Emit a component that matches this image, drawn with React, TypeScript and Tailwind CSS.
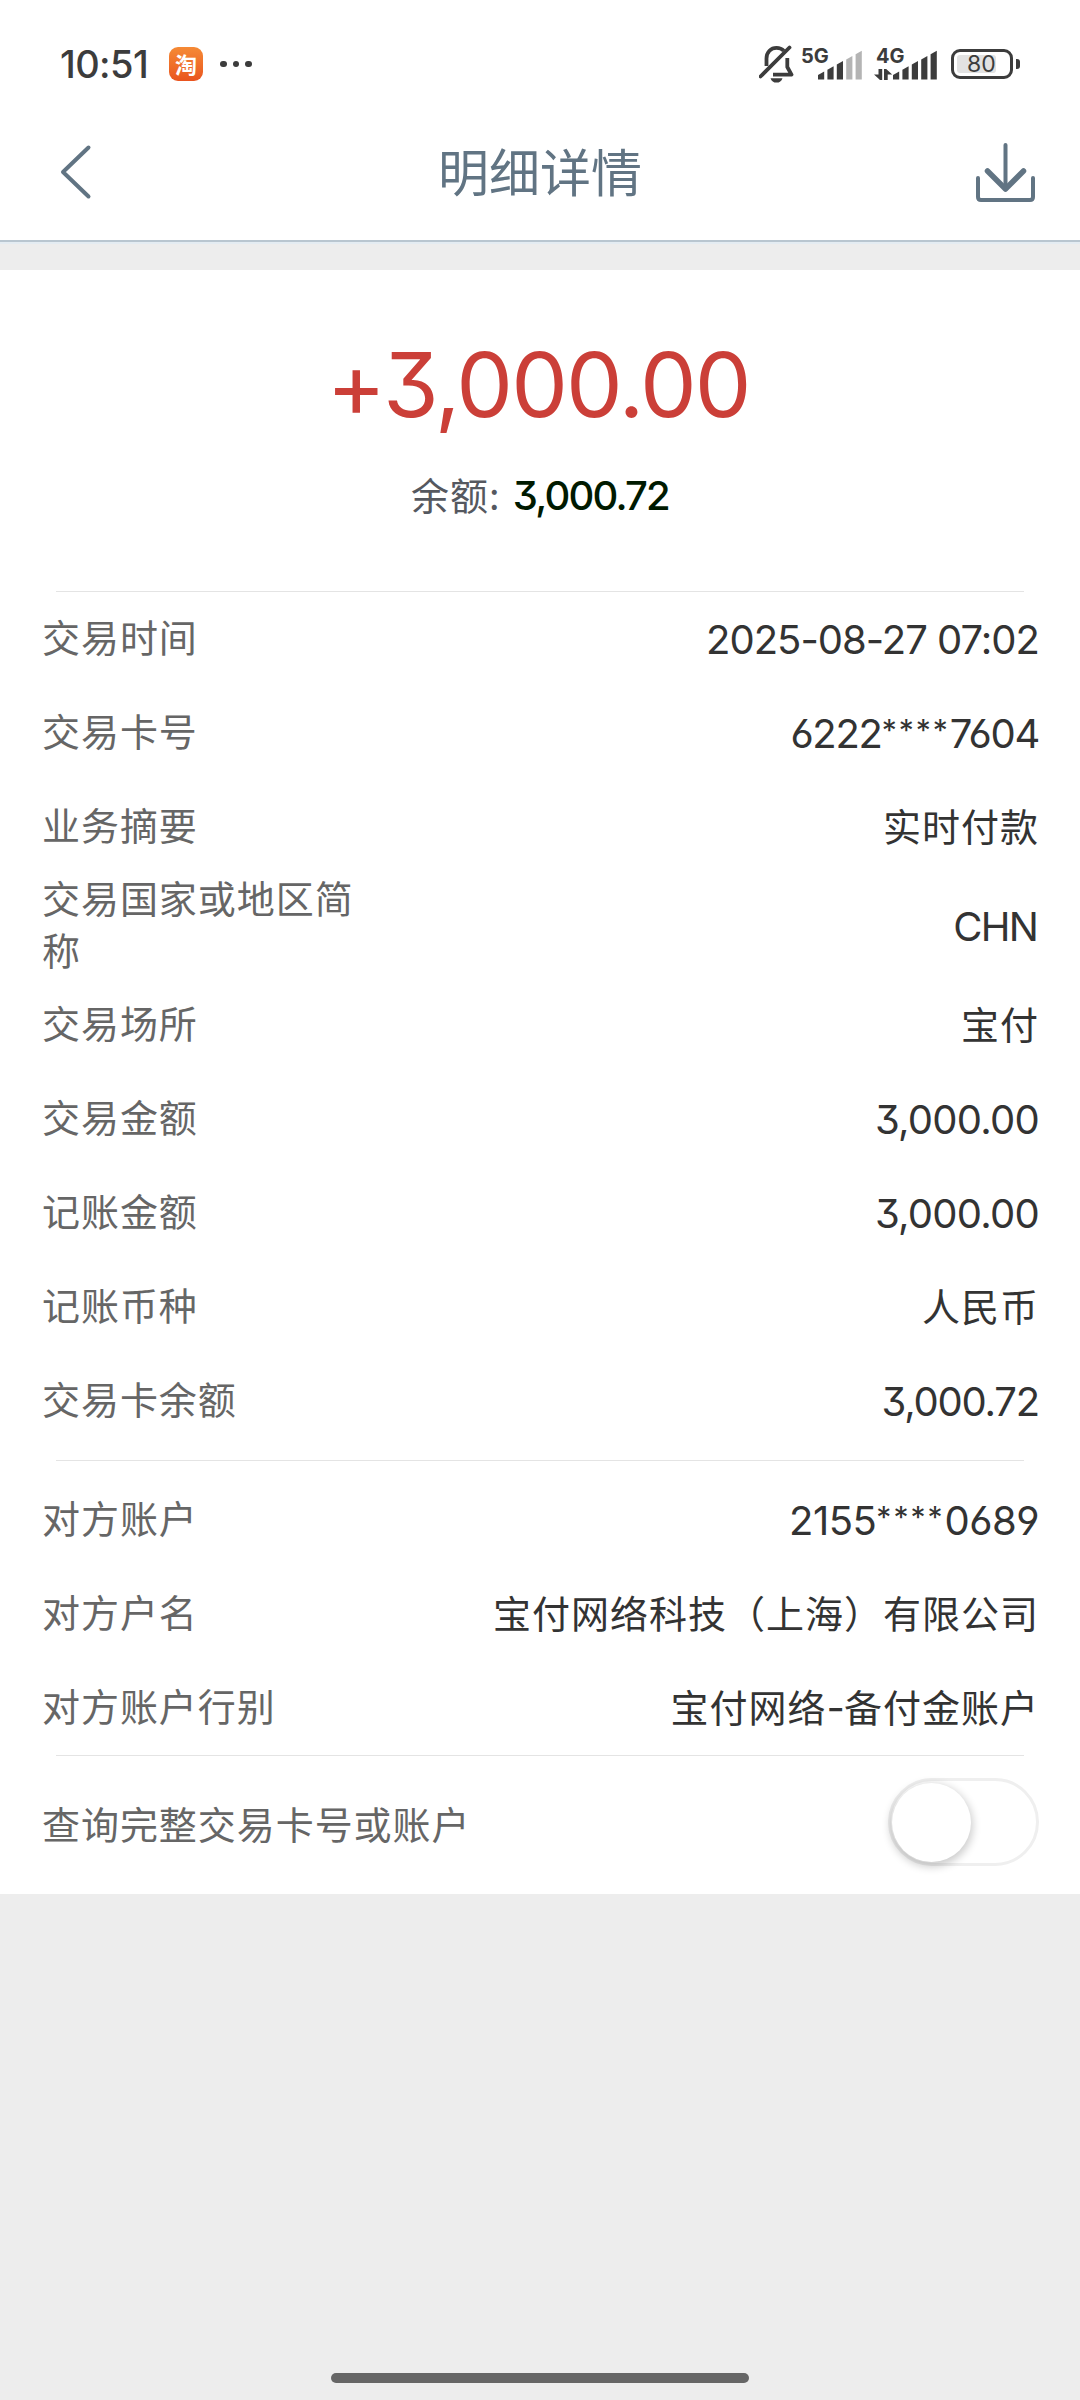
import { useState } from 'react';
import clsx from 'clsx';

interface DetailItem {
  label: string;
  value: string;
  valueClass?: string;
}

const transaction: DetailItem[] = [
  { label: '交易时间', value: '2025-08-27 07:02', valueClass: 'tracking-[-1px]' },
  { label: '交易卡号', value: '6222****7604', valueClass: 'tracking-[-1.3px]' },
  { label: '业务摘要', value: '实时付款' },
  { label: '交易国家或地区简称', value: 'CHN', valueClass: 'mr-[2px] tracking-[-1.8px]' },
  { label: '交易场所', value: '宝付' },
  { label: '交易金额', value: '3,000.00', valueClass: 'tracking-[-0.75px]' },
  { label: '记账金额', value: '3,000.00', valueClass: 'tracking-[-0.75px]' },
  { label: '记账币种', value: '人民币' },
  { label: '交易卡余额', value: '3,000.72', valueClass: 'tracking-[-1.2px]' },
];

const counterparty: DetailItem[] = [
  { label: '对方账户', value: '2155****0689', valueClass: 'tracking-[-0.5px]' },
  { label: '对方户名', value: '宝付网络科技（上海）有限公司' },
  { label: '对方账户行别', value: '宝付网络-备付金账户' },
];

function MutedBell() {
  return (
    <svg className="h-[38px] w-[35px]" viewBox="0 0 35 38" fill="none" stroke="#3c3c3c" strokeWidth={3.8}>
      <path d="M7.5 21V13.5C7.5 7 12 2.8 17.5 2.8c3 0 5.5 1 7.3 3M28.3 13v9l4.2 7.6H14" strokeLinejoin="round" />
      <path d="M1.5 31.5 30.5 2.5" strokeLinecap="round" />
      <path d="M11.5 33.2h12c-1 3-3 4.4-6 4.4s-5-1.4-6-4.4z" fill="#3c3c3c" stroke="none" />
    </svg>
  );
}

function Signal({ label, active, data }: { label: string; active: number; data?: boolean }) {
  return (
    <svg className="-mt-[8px] h-[42px] w-[64px]" viewBox="0 -8 64 42" fill="#3c3c3c">
      <text x="3" y="15.5" className="font-['Inter'] text-[20px] font-bold">
        {label}
      </text>
      {data && <path d="M5.5 22v5.5H1l6 5.5h2.2V22zM11 33V22h2.2l6 5.5h-4.5V33z" />}
      {[0, 1, 2, 3, 4].map((i) => {
        const x = 20 + i * 9.4;
        const top = 26 - i * 5.2;
        return (
          <path
            key={i}
            d={`M${x} ${top + 2}L${x + 6.2} ${top - 1.5}V32.5H${x}z`}
            fill={i < active ? '#3c3c3c' : '#b4b4b4'}
          />
        );
      })}
    </svg>
  );
}

function StatusBar() {
  return (
    <div className="flex h-[104px] items-center pl-[60px] pr-[60px] pt-6 text-[#3c3c3c]">
      <span className="w-[109px] font-['Inter'] text-[38px] font-medium leading-none tracking-[-0.6px]">10:51</span>
      <span className="flex size-[34px] items-center justify-center rounded-[9px] bg-linear-to-b from-[#f58a35] to-[#e9541f] font-['Noto_Sans_CJK_SC'] text-[22px] font-bold leading-none text-white">
        <span className="-mt-[3px]">淘</span>
      </span>
      <span className="ml-[17px] flex gap-[6px]">
        <i className="size-[6.5px] rounded-full bg-[#3c3c3c]" />
        <i className="size-[6.5px] rounded-full bg-[#3c3c3c]" />
        <i className="size-[6.5px] rounded-full bg-[#3c3c3c]" />
      </span>
      <div className="ml-auto flex items-center">
        <MutedBell />
        <div className="ml-[4px] flex gap-[11px]">
          <Signal label="5G" active={3} />
          <Signal label="4G" active={5} data />
        </div>
        <div className="ml-[14px] flex h-[30px] w-[62px] items-center rounded-[9px] border-3 border-[#3c3c3c] p-[3px]">
          <div className="flex h-full w-[39px] items-center rounded-[3px] bg-[#e2e2e2] pl-[10px] font-['Inter'] text-[23px] leading-none">
            80
          </div>
        </div>
        <i className="ml-[3px] h-[10px] w-[4px] rounded-r-[3px] bg-[#3c3c3c]" />
      </div>
    </div>
  );
}

function NavBar() {
  return (
    <header className="flex h-[138px] items-center justify-between border-b-2 border-[#b9c6d0] pl-[57px] pr-[43px] text-[#617483] shadow-[0_2px_0_#e4ecf2]">
      <button aria-label="返回">
        <svg className="h-[56px] w-[50px]" viewBox="0 0 50 56" fill="none" stroke="currentColor" strokeWidth={4}>
          <path d="M31.5 3.5 6 28l25.5 24.5" strokeLinejoin="round" strokeLinecap="round" />
        </svg>
      </button>
      <h1 className="-mt-[3px] text-[51px] leading-none">明细详情</h1>
      <button aria-label="下载" className="mt-[2px]">
        <svg
          className="h-[62px] w-[64px]"
          viewBox="0 0 64 62"
          fill="none"
          stroke="currentColor"
          strokeLinecap="round"
          strokeLinejoin="round"
        >
          <path d="M32.5 3v44M5 36v19q0 3 3 3h49q3 0 3-3V36" strokeWidth={4} />
          <path d="M14.5 29l18 18 18-18" strokeWidth={5.5} />
        </svg>
      </button>
    </header>
  );
}

// Masked digits are drawn smaller and raised to the top of the line
function Digits({ value, className }: { value: string; className?: string }) {
  return (
    <span
      className={clsx(
        "font-['Inter'] text-[40px] [font-feature-settings:'cv03','cv04','cv09']",
        className,
      )}
    >
      {value.split(/(\*+)/).map((part, i) =>
        part.startsWith('*') ? (
          <span key={i} className="align-[7px] text-[30px] leading-none tracking-[2px]">
            {part}
          </span>
        ) : (
          part
        ),
      )}
    </span>
  );
}

function DetailRow({ label, value, valueClass }: DetailItem) {
  return (
    <div className="flex min-h-[94px] items-center justify-between">
      <dt className="-mt-[3px] mb-[3px] w-[330px] leading-[52px] tracking-[0.95px] text-[#666]">{label}</dt>
      <dd className="-mr-px text-right text-[#333]">
        {valueClass ? (
          <Digits value={value} className={valueClass} />
        ) : (
          <div className="-mt-[3px] mb-[3px] tracking-[1px]">
            {value.split('-').map((part, i) => (
              <span key={part}>
                {i > 0 && <span className="font-['Inter'] text-[40px] leading-none tracking-[-1px]">-</span>}
                {part}
              </span>
            ))}
          </div>
        )}
      </dd>
    </div>
  );
}

function Divider() {
  return <hr className="mx-[14px] border-[#e4e4e4]" />;
}

export default function App() {
  const [showFull, setShowFull] = useState(false);

  return (
    <div className="flex h-[2400px] w-[1080px] flex-col bg-[#ededed] font-['Noto_Sans_CJK_SC',sans-serif] text-[38px]">
      <div className="bg-white">
        <StatusBar />
        <NavBar />
      </div>

      <main className="mt-[28px] flex h-[1624px] flex-col bg-white px-[42px]">
        {/* Amount */}
        <section className="flex h-[321px] flex-col items-center pt-[60px]">
          <div className="mr-[4px] font-['Inter'] text-[90px] leading-[110px] tracking-[-2px] text-[#cb3f38] [font-feature-settings:'cv09']">
            +3,000.00
          </div>
          <div className="mt-[28px] flex items-center leading-[56px] text-[#55585f]">
            <span className="-mt-[5px] tracking-[1px]">余额:</span>
            <span className="ml-[12px] font-['Inter'] text-[40px] font-medium tracking-[-1.8px] text-[#001a00] [font-feature-settings:'cv09']">
              3,000.72
            </span>
          </div>
        </section>

        <Divider />
        <dl>
          {transaction.map((item) => (
            <DetailRow key={item.label} {...item} />
          ))}
        </dl>

        <div className="h-[12px]" />
        <Divider />
        <div className="h-[12px]" />
        <dl>
          {counterparty.map((item) => (
            <DetailRow key={item.label} {...item} />
          ))}
        </dl>
        <Divider />

        {/* Full number switch */}
        <div className="flex h-[138px] items-center justify-between">
          <span className="-mt-[5px] tracking-[0.95px] text-[#666]">查询完整交易卡号或账户</span>
          <button
            role="switch"
            aria-checked={showFull}
            aria-label="查询完整交易卡号或账户"
            onClick={() => setShowFull(!showFull)}
            className={clsx(
              '-mr-px mb-[6px] flex h-[88px] w-[151px] items-center rounded-full border-3 border-[#efefef] px-[1px]',
              showFull && 'justify-end bg-[#e8f3ff]',
            )}
          >
            <span className="size-[79px] rounded-full bg-white shadow-[0_3px_8px_2px_rgba(0,0,0,0.2)]" />
          </button>
        </div>
      </main>

      <div className="mx-auto mb-[17px] mt-auto h-[10px] w-[418px] rounded-full bg-[#666]" />
    </div>
  );
}
